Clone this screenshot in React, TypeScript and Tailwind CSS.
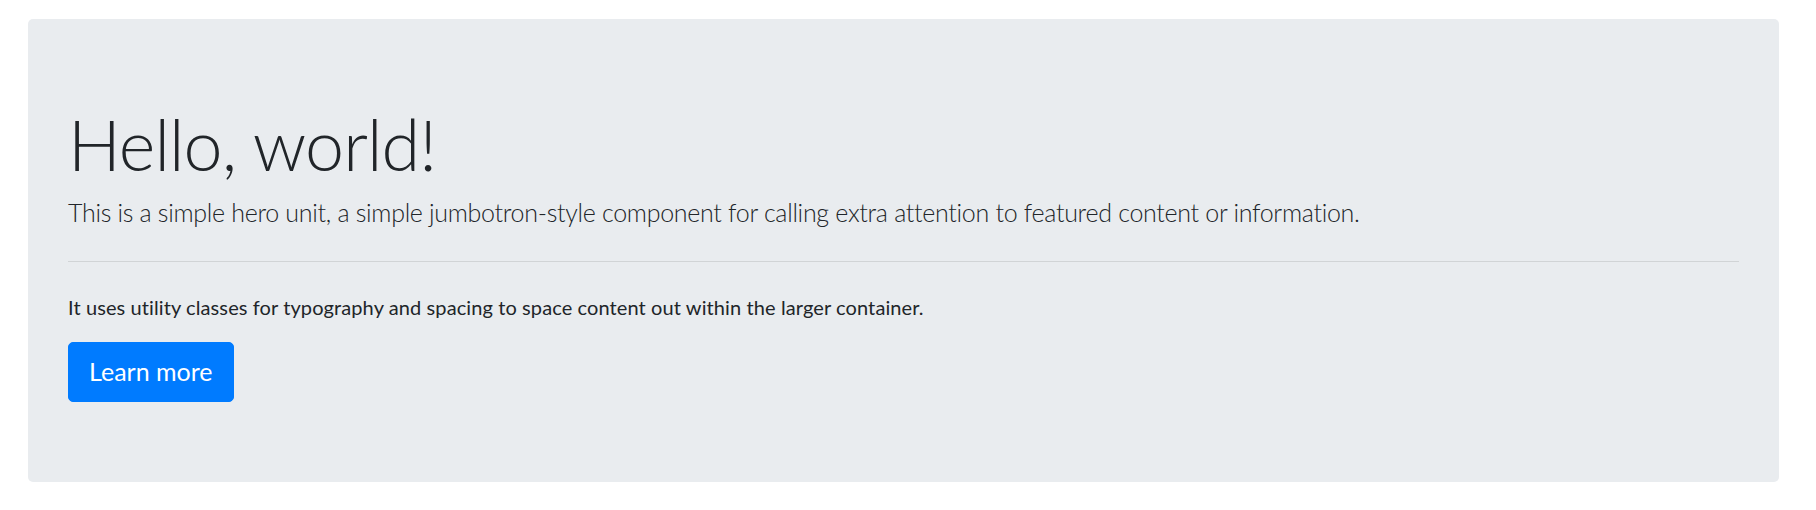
export default function App() {
  return (
    <div className="min-h-[510px] bg-white pt-[19px] pl-[28px] font-['Lato','Liberation_Sans',sans-serif] text-[#212529]">
      <div className="w-[1751px] rounded-[5px] bg-[#e9ecef] px-[40px] py-[80px]">
        <h1 className="mb-[7px] pt-[3px] text-[70px] font-light leading-[84px] tracking-[-0.9px]">Hello, world!</h1>
        <p className="pt-[1px] text-[25px] font-light leading-[36.5px] tracking-[-0.3px]">
          This is a simple hero unit, a simple jumbotron-style component for calling extra attention to featured content or information.
        </p>
        <hr className="my-[30px] border-t border-black/10" />
        <p className="mb-[20px] text-[20px] leading-[30px] tracking-[0.1px]">
          It uses utility classes for typography and spacing to space content out within the larger container.
        </p>
        <button className="h-[60px] rounded-[5px] border border-[#007bff] bg-[#007bff] px-[20px] text-[25px] leading-[37.5px] text-white">
          Learn more
        </button>
      </div>
    </div>
  );
}
